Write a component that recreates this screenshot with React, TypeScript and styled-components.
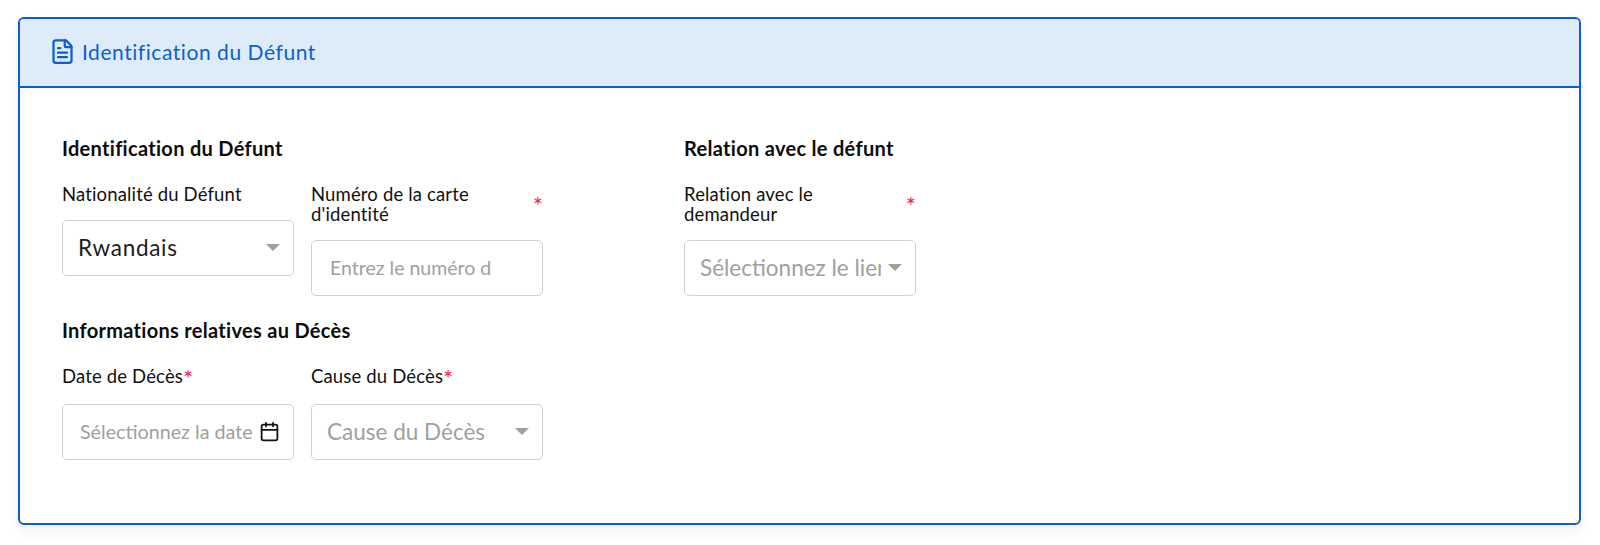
import React from 'react';
import styled, { createGlobalStyle } from 'styled-components';
import { FileText, Calendar } from 'lucide-react';

const GlobalStyle = createGlobalStyle`
  html, body {
    margin: 0;
    background: #ffffff;
    font-family: 'Lato', 'Noto Sans', sans-serif;
  }
`;

const Page = styled.div`
  padding: 17px 19px 21px 18px;
`;

const Card = styled.section`
  height: 508px;
  box-sizing: border-box;
  border: 2px solid #0b5fd3;
  border-radius: 6px;
  overflow: hidden;
  box-shadow: 0 6px 14px rgba(20, 40, 80, 0.06);
`;

const CardHeader = styled.header`
  height: 69px;
  box-sizing: border-box;
  display: flex;
  align-items: center;
  gap: 6px;
  padding: 0 0 2px 29px;
  background: #deebf8;
  border-bottom: 2px solid #0b5fd3;
  color: #0b5fd3;
  font-size: 21px;
  letter-spacing: 0.55px;
`;

const CardBody = styled.div`
  display: flex;
  gap: 141px;
  padding: 48px 0 0 42px;
`;

const Column = styled.div`
  display: flex;
  flex-direction: column;
`;

const SectionTitle = styled.h3`
  margin: 0 0 24px;
  font-size: 20px;
  line-height: 24px;
  font-weight: 700;
  letter-spacing: 0.3px;
  color: #0c0c0c;
`;

const FieldRow = styled.div<{ $bottom?: number }>`
  display: flex;
  align-items: flex-start;
  gap: 17px;
  margin-bottom: ${(props) => props.$bottom || 0}px;
`;

const Field = styled.div`
  width: 232px;
`;

const Label = styled.label`
  display: flex;
  justify-content: space-between;
  align-items: center;
  min-height: 20px;
  margin-bottom: 16px;
  font-size: 18.5px;
  line-height: 20px;
  letter-spacing: 0.15px;
  color: #111111;
`;

const LabelText = styled.span<{ $wrap?: boolean }>`
  max-width: ${(props) => (props.$wrap ? '190px' : 'none')};
`;

const Required = styled.span`
  padding-top: 2px;
  vertical-align: -4px;
  color: #f5224d;
  font-size: 24px;
  line-height: 20px;
`;

const Control = styled.div<{ $pad?: number }>`
  display: flex;
  align-items: center;
  height: 56px;
  box-sizing: border-box;
  padding: 0 13px 0 ${(props) => props.$pad || 15}px;
  background: #ffffff;
  border: 1px solid #ccd2da;
  border-radius: 5px;
`;

const Value = styled.span<{ $muted?: boolean; $size?: number; $spacing?: number }>`
  flex: 1;
  min-width: 0;
  overflow: hidden;
  white-space: nowrap;
  padding-bottom: 2px;
  font-size: ${(props) => props.$size || 22.5}px;
  letter-spacing: ${(props) => props.$spacing || 0}px;
  color: ${(props) => (props.$muted ? '#a0a0a0' : '#1c1c1c')};
`;

const Caret = styled.span`
  flex: none;
  width: 0;
  height: 0;
  margin: 0 0 1px 7px;
  border-left: 7px solid transparent;
  border-right: 7px solid transparent;
  border-top: 7px solid #a0a0a0;
`;

const DateIcon = styled(Calendar)`
  flex: none;
  margin: 0 0 2px 6px;
  color: #111111;
`;

const App: React.FC = () => {
  return (
    <Page>
      <GlobalStyle />
      <Card>
        <CardHeader>
          <FileText size={27} strokeWidth={2} />
          Identification du Défunt
        </CardHeader>
        <CardBody>
          <Column>
            <SectionTitle>Identification du Défunt</SectionTitle>
            <FieldRow $bottom={22}>
              <Field>
                <Label>
                  <LabelText>Nationalité du Défunt</LabelText>
                </Label>
                <Control>
                  <Value $spacing={0.7}>Rwandais</Value>
                  <Caret />
                </Control>
              </Field>
              <Field>
                <Label>
                  <LabelText $wrap>Numéro de la carte d'identité</LabelText>
                  <Required>*</Required>
                </Label>
                <Control $pad={18}>
                  <Value $muted $size={19.5}>Entrez le numéro d</Value>
                </Control>
              </Field>
            </FieldRow>
            <SectionTitle>Informations relatives au Décès</SectionTitle>
            <FieldRow>
              <Field>
                <Label>
                  <LabelText>Date de Décès<Required>*</Required></LabelText>
                </Label>
                <Control $pad={17}>
                  <Value $muted $size={19.7}>Sélectionnez la date</Value>
                  <DateIcon size={21} strokeWidth={2} />
                </Control>
              </Field>
              <Field>
                <Label>
                  <LabelText>Cause du Décès<Required>*</Required></LabelText>
                </Label>
                <Control>
                  <Value $muted>Cause du Décès</Value>
                  <Caret />
                </Control>
              </Field>
            </FieldRow>
          </Column>
          <Column>
            <SectionTitle>Relation avec le défunt</SectionTitle>
            <Field>
              <Label>
                <LabelText $wrap>Relation avec le demandeur</LabelText>
                <Required>*</Required>
              </Label>
              <Control>
                <Value $muted>Sélectionnez le lien</Value>
                <Caret />
              </Control>
            </Field>
          </Column>
        </CardBody>
      </Card>
    </Page>
  );
};

export default App;
